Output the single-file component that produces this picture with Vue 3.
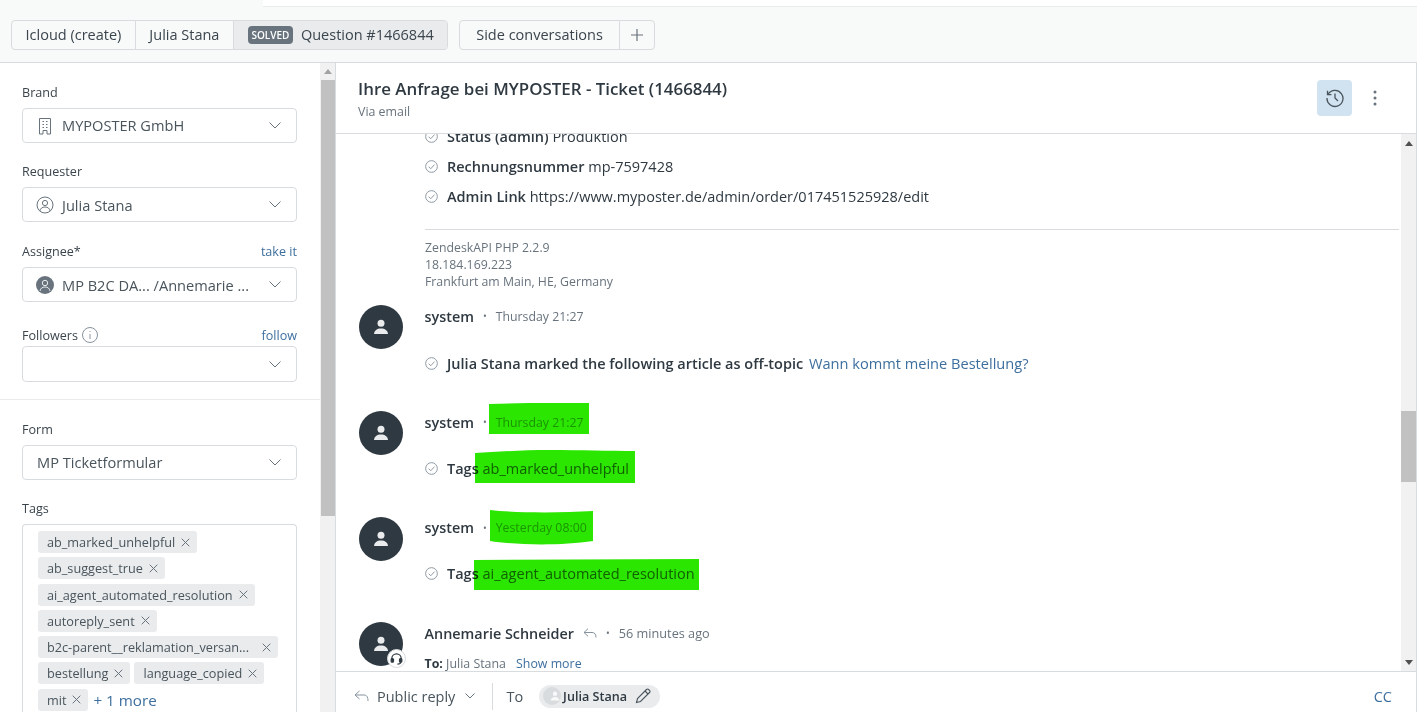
<script setup>
const tags = [
  ['ab_marked_unhelpful'],
  ['ab_suggest_true'],
  ['ai_agent_automated_resolution'],
  ['autoreply_sent'],
  ['b2c-parent__reklamation_versan...'],
  ['bestellung', 'language_copied'],
]
</script>

<template>
  <div class="page">
    <header class="topbar">
      <div class="top-strip"><div class="top-white"></div></div>
      <div class="tabs">
        <div class="tabgroup">
          <div class="tab">Icloud (create)</div>
          <div class="tab">Julia Stana</div>
          <div class="tab active"><span class="badge">SOLVED</span>Question #1466844</div>
        </div>
        <div class="tabgroup">
          <div class="tab side">Side conversations</div>
          <div class="tab plus">
            <svg width="14" height="14" viewBox="0 0 14 14"><path d="M7 1v12M1 7h12" stroke="#68737d" stroke-width="1.2" fill="none"/></svg>
          </div>
        </div>
      </div>
    </header>

    <div class="workspace">
      <aside class="side-panel">
        <div class="side-inner">
          <div class="fields first">
            <div class="label-row"><label>Brand</label></div>
            <div class="select">
              <svg class="lead" width="14" height="18" viewBox="0 0 14 18" fill="none" stroke="#68737d"><path d="M1.500 17V1.500h11V17h-3.500v-3.500h-4V17z"/><path d="M4.500 4.500h1.500M8 4.500h1.500M4.500 7.500h1.500M8 7.500h1.500M4.500 10.500h1.500M8 10.500h1.500"/></svg>
              <span class="val brand-val">MYPOSTER GmbH</span>
              <svg class="chev" width="12" height="7" viewBox="0 0 12 7"><path d="M.5.5 6 6 11.500.5" fill="none" stroke="#68737d"/></svg>
            </div>
            <div class="label-row gap"><label>Requester</label></div>
            <div class="select">
              <svg class="lead user" width="18" height="18" viewBox="0 0 18 18" fill="none" stroke="#68737d"><circle cx="9" cy="9" r="8"/><circle cx="9" cy="7" r="2.600"/><path d="M3.800 15c.6-2.700 2.500-4 5.200-4s4.600 1.300 5.200 4"/></svg>
              <span class="val">Julia Stana</span>
              <svg class="chev" width="12" height="7" viewBox="0 0 12 7"><path d="M.5.5 6 6 11.500.5" fill="none" stroke="#68737d"/></svg>
            </div>
            <div class="label-row gap assignee"><label>Assignee*</label><a>take it</a></div>
            <div class="select">
              <svg class="lead user" width="18" height="18" viewBox="0 0 18 18"><circle cx="9" cy="9" r="9" fill="#68737d"/><circle cx="9" cy="7" r="2.700" fill="none" stroke="#e9ebed"/><path d="M4 15c.5-2.700 2.300-4 5-4s4.500 1.300 5 4" fill="none" stroke="#e9ebed"/></svg>
              <span class="val clip">MP B2C DA... /Annemarie ...</span>
              <svg class="chev" width="12" height="7" viewBox="0 0 12 7"><path d="M.5.5 6 6 11.500.5" fill="none" stroke="#68737d"/></svg>
            </div>
            <div class="label-row followers">
              <label>Followers
                <svg class="info" width="16" height="16" viewBox="0 0 16 16" fill="none" stroke="#87929d"><circle cx="8" cy="8" r="7.500"/><path d="M8 7v5" /><circle cx="8" cy="4.500" r=".6" fill="#87929d" stroke="none"/></svg>
              </label>
              <a>follow</a>
            </div>
            <div class="select tall">
              <svg class="chev" width="12" height="7" viewBox="0 0 12 7"><path d="M.5.5 6 6 11.500.5" fill="none" stroke="#68737d"/></svg>
            </div>
          </div>
          <div class="fields second">
            <div class="label-row"><label>Form</label></div>
            <div class="select">
              <span class="val brand-val">MP Ticketformular</span>
              <svg class="chev" width="12" height="7" viewBox="0 0 12 7"><path d="M.5.5 6 6 11.500.5" fill="none" stroke="#68737d"/></svg>
            </div>
            <div class="label-row gap-tags"><label>Tags</label></div>
            <div class="tagbox">
              <div v-for="(row, i) in tags" :key="i" class="tagrow">
                <span v-for="t in row" :key="t" class="chip">{{ t }}
                  <svg width="9" height="9" viewBox="0 0 9 9"><path d="M.7.7l7.600 7.600M8.300.7.700 8.300" stroke="#68737d" fill="none"/></svg>
                </span>
              </div>
              <div class="tagrow">
                <span class="chip">mit
                  <svg width="9" height="9" viewBox="0 0 9 9"><path d="M.7.7l7.600 7.600M8.300.7.700 8.300" stroke="#68737d" fill="none"/></svg>
                </span>
                <a class="more">+ 1 more</a>
              </div>
            </div>
          </div>
        </div>
        <div class="scroll left-scroll">
          <span class="arrow up"></span>
          <div class="thumb"></div>
        </div>
      </aside>

      <main class="main">
        <div class="ticket-head">
          <div>
            <h1>Ihre Anfrage bei MYPOSTER - Ticket (1466844)</h1>
            <p>Via email</p>
          </div>
          <div class="head-actions">
            <button class="history">
              <svg width="20" height="20" viewBox="0 0 20 20" fill="none" stroke="#49545c" stroke-width="1.300"><path d="M3.200 6.200A8 8 0 1 1 2 10"/><path d="M2.500 2.800v3.900h3.900" /><path d="M10 5.500V10l3 3"/></svg>
            </button>
            <svg width="4" height="16" viewBox="0 0 4 16" fill="#68737d"><circle cx="2" cy="2" r="1.500"/><circle cx="2" cy="8" r="1.500"/><circle cx="2" cy="14" r="1.500"/></svg>
          </div>
        </div>

        <div class="conv-wrap">
          <div class="conv">
            <div class="conv-inner">
              <div class="fieldlines">
                <div class="check-row"><svg class="chk" width="13" height="13" viewBox="0 0 14 14" fill="none" stroke="#87929d"><circle cx="7" cy="7" r="6.300"/><path d="M4 7.200l2.200 2.200L10.200 5"/></svg><span><b>Status (admin)</b> Produktion</span></div>
                <div class="check-row"><svg class="chk" width="13" height="13" viewBox="0 0 14 14" fill="none" stroke="#87929d"><circle cx="7" cy="7" r="6.300"/><path d="M4 7.200l2.200 2.200L10.200 5"/></svg><span><b>Rechnungsnummer</b> mp-7597428</span></div>
                <div class="check-row"><svg class="chk" width="13" height="13" viewBox="0 0 14 14" fill="none" stroke="#87929d"><circle cx="7" cy="7" r="6.300"/><path d="M4 7.200l2.200 2.200L10.200 5"/></svg><span><b>Admin Link</b> https://www.myposter.de/admin/order/017451525928/edit</span></div>
              </div>
              <div class="meta">
                <div>ZendeskAPI PHP 2.2.9</div>
                <div>18.184.169.223</div>
                <div>Frankfurt am Main, HE, Germany</div>
              </div>

              <section class="event">
                <div class="avatar"><svg width="16" height="16" viewBox="0 0 16 16" fill="#e9ebed"><circle cx="8" cy="4.300" r="3.500"/><path d="M1 15c.4-3.600 3-5.500 7-5.500s6.600 1.900 7 5.500z"/></svg></div>
                <div class="ev-body">
                  <div class="ev-head"><strong>system</strong><i>•</i><time>Thursday 21:27</time></div>
                  <div class="check-row comment first-comment"><svg class="chk" width="13" height="13" viewBox="0 0 14 14" fill="none" stroke="#87929d"><circle cx="7" cy="7" r="6.300"/><path d="M4 7.200l2.200 2.200L10.200 5"/></svg><span><b>Julia Stana marked the following article as off-topic</b> <a>Wann kommt meine Bestellung?</a></span></div>
                </div>
              </section>

              <section class="event">
                <div class="avatar"><svg width="16" height="16" viewBox="0 0 16 16" fill="#e9ebed"><circle cx="8" cy="4.300" r="3.500"/><path d="M1 15c.4-3.600 3-5.500 7-5.500s6.600 1.900 7 5.500z"/></svg></div>
                <div class="ev-body">
                  <div class="ev-head"><strong>system</strong><i>•</i><time class="lit">Thursday 21:27</time>
                    <svg class="mark m1" width="100" height="31" viewBox="0 0 100 31"><path d="M0 1 40 0 100 0 100 31 0 31z"/></svg>
                  </div>
                  <div class="check-row comment"><svg class="chk" width="13" height="13" viewBox="0 0 14 14" fill="none" stroke="#87929d"><circle cx="7" cy="7" r="6.300"/><path d="M4 7.200l2.200 2.200L10.200 5"/></svg><span><b>Tags</b> <span class="lit-tag">ab_marked_unhelpful</span></span>
                    <svg class="mark m2" width="160" height="34" viewBox="0 0 160 34"><path d="M0 3C20 2 45 0 75 0s60 1 85 1v32H0z"/></svg>
                  </div>
                </div>
              </section>

              <section class="event">
                <div class="avatar"><svg width="16" height="16" viewBox="0 0 16 16" fill="#e9ebed"><circle cx="8" cy="4.300" r="3.500"/><path d="M1 15c.4-3.600 3-5.500 7-5.500s6.600 1.900 7 5.500z"/></svg></div>
                <div class="ev-body">
                  <div class="ev-head"><strong>system</strong><i>•</i><time class="lit">Yesterday 08:00</time>
                    <svg class="mark m3" width="103" height="35" viewBox="0 0 103 35"><path d="M0 0C25 3 70 3 103 1v30C70 36 25 35 0 31z"/></svg>
                  </div>
                  <div class="check-row comment"><svg class="chk" width="13" height="13" viewBox="0 0 14 14" fill="none" stroke="#87929d"><circle cx="7" cy="7" r="6.300"/><path d="M4 7.200l2.200 2.200L10.200 5"/></svg><span><b>Tags</b> <span class="lit-tag">ai_agent_automated_resolution</span></span>
                    <svg class="mark m4" width="225" height="31" viewBox="0 0 225 31"><path d="M0 1 225 0v31H0z"/></svg>
                  </div>
                </div>
              </section>

              <section class="event last">
                <div class="avatar"><svg width="16" height="16" viewBox="0 0 16 16" fill="#e9ebed"><circle cx="8" cy="4.300" r="3.500"/><path d="M1 15c.4-3.600 3-5.500 7-5.500s6.600 1.900 7 5.500z"/></svg>
                  <span class="agent"><svg width="16" height="16" viewBox="0 0 16 16" fill="none" stroke="#2f3941" stroke-width="1.300"><path d="M3 9.500V8a5 5 0 0 1 10 0v1.500"/><rect x="2.300" y="8" width="2.500" height="4" rx="1" fill="#2f3941"/><rect x="11.200" y="8" width="2.500" height="4" rx="1" fill="#2f3941"/><path d="M12.500 12c0 1.500-1.500 2-3.500 2"/></svg></span>
                </div>
                <div class="ev-body">
                  <div class="ev-head"><strong>Annemarie Schneider</strong>
                    <svg class="rep" width="14" height="11" viewBox="0 0 14 11" fill="none" stroke="#87929d"><path d="M5 .7 1 4.500 5 8.300M1 4.500h8c2.500 0 4 1.500 4 5"/></svg>
                    <i>•</i><time>56 minutes ago</time></div>
                  <div class="to"><b>To:</b> Julia Stana<a>Show more</a></div>
                </div>
              </section>
            </div>
          </div>
          <div class="scroll right-scroll">
            <span class="arrow up"></span>
            <div class="thumb"></div>
            <span class="arrow down"></span>
          </div>
        </div>

        <footer class="compose">
          <svg class="rep-big" width="15" height="12" viewBox="0 0 15 12" fill="none" stroke="#87929d"><path d="M5.500 1 1 5l4.500 4M1 5h9c2.500 0 4 1.600 4 6"/></svg>
          <span class="channel">Public reply</span>
          <svg class="chev-sm" width="10" height="6" viewBox="0 0 10 6"><path d="M.5.5 5 5 9.500.5" fill="none" stroke="#68737d"/></svg>
          <span class="divider"></span>
          <span class="to-label">To</span>
          <span class="pill">
            <span class="pill-av"><svg width="10" height="10" viewBox="0 0 16 16" fill="#f8f9f9"><circle cx="8" cy="4.300" r="3.500"/><path d="M1 15c.4-3.600 3-5.500 7-5.500s6.600 1.900 7 5.500z"/></svg></span>
            <b>Julia Stana</b>
            <svg width="16" height="16" viewBox="0 0 16 16" fill="none" stroke="#49545c" stroke-width="1.100"><path d="M1.500 14.500l1-4L11.500 1.500a1.500 1.500 0 0 1 2.100 0l.9.9a1.500 1.500 0 0 1 0 2.100L5.500 13.500z"/><path d="M10 3l3 3"/></svg>
          </span>
          <a class="cc">CC</a>
        </footer>
      </main>
    </div>
  </div>
</template>

<style scoped>
.page {
  width: 1417px;
  height: 712px;
  overflow: hidden;
  background: #f8f9f9;
  color: #2f3941;
  font-family: "Open Sans", "Noto Sans", sans-serif;
  font-size: 14.5px;
  display: flex;
  flex-direction: column;
}
.topbar { height: 62px; flex: none; }
.top-strip { height: 7px; padding-left: 263px; }
.top-white { height: 7px; background: #fff; border-bottom: 1px solid #e9ebed; box-sizing: border-box; }
.tabs { display: flex; gap: 11.5px; padding: 13px 0 0 11px; }
.tabgroup { display: flex; height: 30px; box-sizing: border-box; border: 1px solid #d8dcde; border-radius: 4px; overflow: hidden; }
.tab { display: flex; align-items: center; padding: 0 13.5px 2px; border-right: 1px solid #d8dcde; font-size: 14.5px; white-space: nowrap; color: #3b454d; }
.tab:last-child { border-right: 0; }
.tab.active { background: #e9ebed; padding: 0 13px 2px 14px; }
.tab.side { padding: 0 16px 2px; }
.tab.plus { padding: 0 10px 1px; }
.badge { display: inline-block; background: #68737d; color: #fff; font-size: 10px; font-weight: 600; border-radius: 4px; width: 45px; height: 18px; line-height: 18px; text-align: center; margin: 2px 8px 0 0; }

.workspace { flex: 1; min-height: 0; display: flex; border-top: 1px solid #d8dcde; background: #fff; }
.side-panel { width: 335px; flex: none; display: flex; overflow: hidden; }
.side-inner { width: 320px; flex: none; }
.fields { padding: 0 23px 0 22px; }
.fields.first { padding-top: 20px; padding-bottom: 17px; border-bottom: 1px solid #e9ebed; }
.fields.second { padding-top: 20px; }
.label-row { display: flex; justify-content: space-between; align-items: center; height: 18px; margin-bottom: 7px; font-size: 12.6px; color: #3b454d; }
.label-row label { display: flex; align-items: center; gap: 4px; font-weight: 500; }
.label-row a { color: #3d6f9e; font-weight: 400; }
.label-row.gap { margin-top: 19px; }
.label-row.assignee { margin-top: 20px; }
.label-row.followers { margin-top: 24px; margin-bottom: 2px; }
.label-row.gap-tags { margin-top: 19px; }
.select { height: 35px; box-sizing: border-box; border: 1px solid #d8dcde; border-radius: 4px; display: flex; align-items: center; padding: 0 15px 0 14px; position: relative; }
.select.tall { height: 36px; }
.select .val { font-size: 14.6px; color: #49545c; white-space: nowrap; }
.select .brand-val { padding-bottom: 2px; }
.select .clip { overflow: hidden; }
.lead { margin-right: 10px; margin-left: 1px; flex: none; }
.lead.user { margin-left: -1px; margin-right: 8px; }
.chev { margin-left: auto; flex: none; }

.tagbox { border: 1px solid #d8dcde; border-bottom: 0; border-radius: 4px 4px 0 0; padding: 6px 15px 0; height: 200px; box-sizing: border-box; }
.tagrow { display: flex; align-items: center; gap: 4px; margin-bottom: 4.3px; }
.tagrow:nth-child(5) .chip { gap: 13px; }
.chip { display: inline-flex; align-items: center; gap: 6px; height: 22px; padding: 0 7px 0 9px; background: #e9ebed; border-radius: 3px; font-size: 12.7px; color: #49545c; white-space: nowrap; }
.more { color: #3d6f9e; font-size: 15.2px; margin-left: 1px; }

.scroll { width: 15px; flex: none; background: #f1f1f1; position: relative; }
.arrow { position: absolute; left: 4px; width: 0; height: 0; border-left: 4px solid transparent; border-right: 4px solid transparent; }
.arrow.up { border-bottom: 5px solid #a3a3a3; }
.arrow.down { border-top: 5px solid #505050; }
.left-scroll .arrow.up { top: 6px; }
.left-scroll .thumb { position: absolute; top: 17px; left: 1px; right: 0; height: 436px; background: #c1c1c1; }
.right-scroll .arrow.up { top: 7px; border-bottom-color: #505050; }
.right-scroll .arrow.down { bottom: 6px; }
.right-scroll .thumb { position: absolute; top: 277px; left: 0; right: 0; height: 71px; background: #c1c1c1; }

.main { flex: 1; min-width: 0; display: flex; flex-direction: column; border-left: 1px solid #d8dcde; border-right: 1px solid #d8dcde; }
.ticket-head { height: 71px; flex: none; box-sizing: border-box; border-bottom: 1px solid #d8dcde; padding: 15px 39px 0 22px; display: flex; justify-content: space-between; }
h1 { margin: 0; font-size: 16.9px; line-height: 22px; font-weight: 600; color: #2f3941; }
.ticket-head p { margin: 3px 0 0; font-size: 12.4px; line-height: 18px; color: #68737d; }
.head-actions { display: flex; align-items: center; gap: 21px; height: 36px; margin-top: 2px; }
.history { width: 35px; height: 36px; border: 0; border-radius: 4px; background: #d1e3f0; padding: 0; display: flex; align-items: center; justify-content: center; }

.conv-wrap { flex: 1; min-height: 0; display: flex; justify-content: space-between; }
.conv { flex: 1; min-width: 0; overflow: hidden; }
.conv-inner { margin-top: -13px; padding-left: 23px; }
.fieldlines { padding-left: 66px; padding-bottom: 18px; position: relative; }
.check-row { display: flex; align-items: center; height: 30px; font-size: 14.5px; white-space: nowrap; position: relative; color: #2f3941; }
.check-row b { font-weight: 600; }
.chk { margin: 0 9px 0 0; flex: none; }
.meta { margin-left: 66px; margin-right: 2px; border-top: 1px solid #d8dcde; padding-top: 9px; font-size: 12.3px; line-height: 17px; color: #68737d; }

.event { display: flex; gap: 22px; margin-top: 15px; }
.event + .event { margin-top: 37.5px; }
.avatar { width: 44px; height: 44px; border-radius: 50%; background: #2f3941; display: flex; align-items: center; justify-content: center; flex: none; position: relative; }
.ev-body { flex: 1; min-width: 0; }
.ev-head { display: flex; align-items: center; height: 22px; position: relative; font-size: 14.5px; }
.ev-head strong { font-weight: 600; font-size: 14.4px; margin-left: -.5px; }
.ev-head i { font-style: normal; font-size: 10px; color: #68737d; margin: 0 9px; }
.ev-head time { font-size: 12.3px; color: #68737d; }
.ev-head time.lit { color: #9aa6b0; }
.lit-tag { color: #5f6b75; }
.comment { height: 22px; margin-top: 24px; }
.first-comment { margin-top: 25px; margin-bottom: -.5px; }
.comment a { margin-left: 2px; font-size: 14.6px; }
.comment a, .to a { color: #3d6f9e; font-weight: 400; }
.mark { position: absolute; fill: #2ae600; mix-blend-mode: multiply; }
.m1 { left: 64px; top: -8px; }
.m2 { left: 50px; top: -7px; }
.m3 { left: 65px; top: -6.5px; }
.m4 { left: 49px; top: -3.5px; }
.agent { position: absolute; right: -3px; bottom: -2px; width: 19px; height: 19px; border-radius: 50%; background: #fff; border: 1px solid #d8dcde; box-sizing: border-box; display: flex; align-items: center; justify-content: center; }
.agent svg { width: 15px; height: 15px; }
.rep { margin: 0 0 0 9px; }
.event.last i { margin: 0 9px; }
.event.last time { font-size: 12.7px; }
.to { font-size: 12.4px; height: 17px; line-height: 17px; margin-top: 10.5px; margin-left: -.5px; color: #68737d; }
.to b { color: #2f3941; font-weight: 700; }
.to a { margin-left: 10px; }

.compose { height: 41px; flex: none; box-sizing: border-box; border-top: 1px solid #d8dcde; display: flex; align-items: center; padding: 8px 24px 0 18px; font-size: 14.5px; color: #49545c; }
.channel { margin-left: 8px; }
.chev-sm { margin-left: 10px; }
.divider { width: 1px; height: 27px; background: #d8dcde; margin: 0 13px 0 17px; }
.pill { margin-left: 16px; display: flex; align-items: center; height: 23px; width: 121px; box-sizing: border-box; background: #e9ebed; border-radius: 12px; padding-left: 4px; gap: 2px; font-size: 12.6px; }
.pill b { font-weight: 600; color: #2f3941; }
.pill svg:last-child { margin-left: 6px; }
.pill-av { width: 18px; height: 18px; border-radius: 50%; background: #d8dcde; display: flex; align-items: center; justify-content: center; }
.cc { margin-left: auto; color: #3d6f9e; }
</style>
